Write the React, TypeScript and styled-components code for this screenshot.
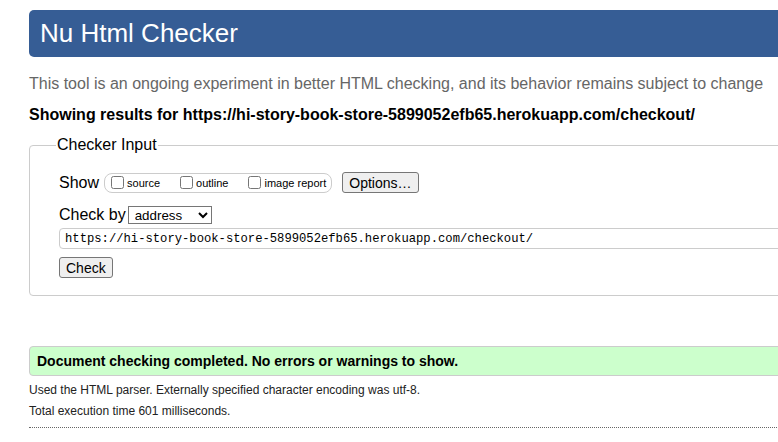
import styled, { createGlobalStyle } from "styled-components";

const GlobalStyle = createGlobalStyle`
  html, body {
    margin: 0;
    padding: 0;
    background: #fff;
    overflow: hidden;
  }
  body {
    font-family: "Liberation Sans", Arial, sans-serif;
    color: #000;
  }
`;

const Page = styled.main`
  width: 830px;
  padding: 10px 0 0 29px;
`;

const Header = styled.h1`
  margin: 0;
  height: 47px;
  display: flex;
  align-items: center;
  padding: 0 11px;
  background-color: #365d95;
  color: #fff;
  border-radius: 5px;
  font-size: 26px;
  font-weight: normal;
`;

const Intro = styled.p`
  margin: 18px 0 0;
  font-size: 16px;
  line-height: 18px;
  color: #666;
`;

const Results = styled.p`
  margin: 13px 0 0;
  font-size: 16px;
  line-height: 18px;
  font-weight: bold;
`;

const Fieldset = styled.fieldset`
  margin: 12px 0 0;
  padding: 0 29px 17px;
  border: 1px solid #ccc;
  border-radius: 4px;
  min-width: 0;
`;

const Legend = styled.legend`
  padding: 0 1px;
  margin-left: -3px;
  font-size: 16px;
  line-height: 18px;
`;

const Row = styled.div<{ $top: number }>`
  display: flex;
  align-items: center;
  margin-top: ${(p) => p.$top}px;
  font-size: 16px;
`;

const Label = styled.span<{ $gap: number }>`
  margin-right: ${(p) => p.$gap}px;
`;

const Group = styled.span`
  display: inline-flex;
  align-items: center;
  gap: 20px;
  height: 18px;
  padding: 0 5px 0 6px;
  border: 1px solid #ccc;
  border-radius: 8px;
  margin-right: 10px;
`;

const Option = styled.label`
  display: inline-flex;
  align-items: center;
  font-size: 11px;
  input {
    width: 13px;
    height: 13px;
    margin: 0 3px 0 0;
  }
`;

const Button = styled.button`
  font-family: "Liberation Sans", Arial, sans-serif;
  font-size: 14px;
  height: 21px;
  padding: 0 6px;
  background: #efefef;
  border: 1px solid #767676;
  border-radius: 3px;
  color: #000;
`;

const Select = styled.select`
  font-family: "Liberation Sans", Arial, sans-serif;
  font-size: 13.33px;
  width: 84px;
  height: 18px;
  padding: 0 0 0 2px;
  border: 1px solid #767676;
  border-radius: 0;
  background: #fff;
  color: #000;
`;

const UrlInput = styled.input`
  display: block;
  box-sizing: border-box;
  width: 100%;
  height: 21px;
  margin-top: 4px;
  padding: 0 5px;
  border: 1px solid #ccc;
  border-radius: 4px;
  font-family: "Liberation Mono", "DejaVu Sans Mono", monospace;
  font-size: 12.2px;
  color: #000;
`;

const Success = styled.p`
  margin: 50px 0 0;
  height: 28px;
  display: flex;
  align-items: center;
  padding: 0 7px;
  border: 1px solid #ccc;
  border-radius: 4px;
  background-color: #ccffcc;
  font-size: 14px;
  font-weight: bold;
`;

const Details = styled.p<{ $top: number }>`
  margin: ${(p) => p.$top}px 0 0;
  font-size: 12px;
  line-height: 14px;
  color: #222;
`;

const Divider = styled.hr`
  margin: 9px 0 0;
  border: 0;
  border-top: 1px dotted #666;
`;

export default function App() {
  const url = "https://hi-story-book-store-5899052efb65.herokuapp.com/checkout/";
  return (
    <Page>
      <GlobalStyle />
      <Header>Nu Html Checker</Header>
      <Intro>
        This tool is an ongoing experiment in better HTML checking, and its behavior remains subject to change
      </Intro>
      <Results>Showing results for {url}</Results>
      <Fieldset>
        <Legend>Checker Input</Legend>
        <Row $top={18}>
          <Label $gap={5}>Show</Label>
          <Group>
            <Option>
              <input type="checkbox" />
              source
            </Option>
            <Option>
              <input type="checkbox" />
              outline
            </Option>
            <Option>
              <input type="checkbox" />
              image report
            </Option>
          </Group>
          <Button type="button">Options…</Button>
        </Row>
        <Row $top={13}>
          <Label $gap={2}>Check by</Label>
          <Select defaultValue="address">
            <option value="address">address</option>
            <option value="file">file upload</option>
            <option value="text">text input</option>
          </Select>
        </Row>
        <UrlInput type="url" defaultValue={url} />
        <Row $top={8}>
          <Button type="button">Check</Button>
        </Row>
      </Fieldset>
      <Success>Document checking completed. No errors or warnings to show.</Success>
      <Details $top={7}>Used the HTML parser. Externally specified character encoding was utf-8.</Details>
      <Details $top={7}>Total execution time 601 milliseconds.</Details>
      <Divider />
    </Page>
  );
}
